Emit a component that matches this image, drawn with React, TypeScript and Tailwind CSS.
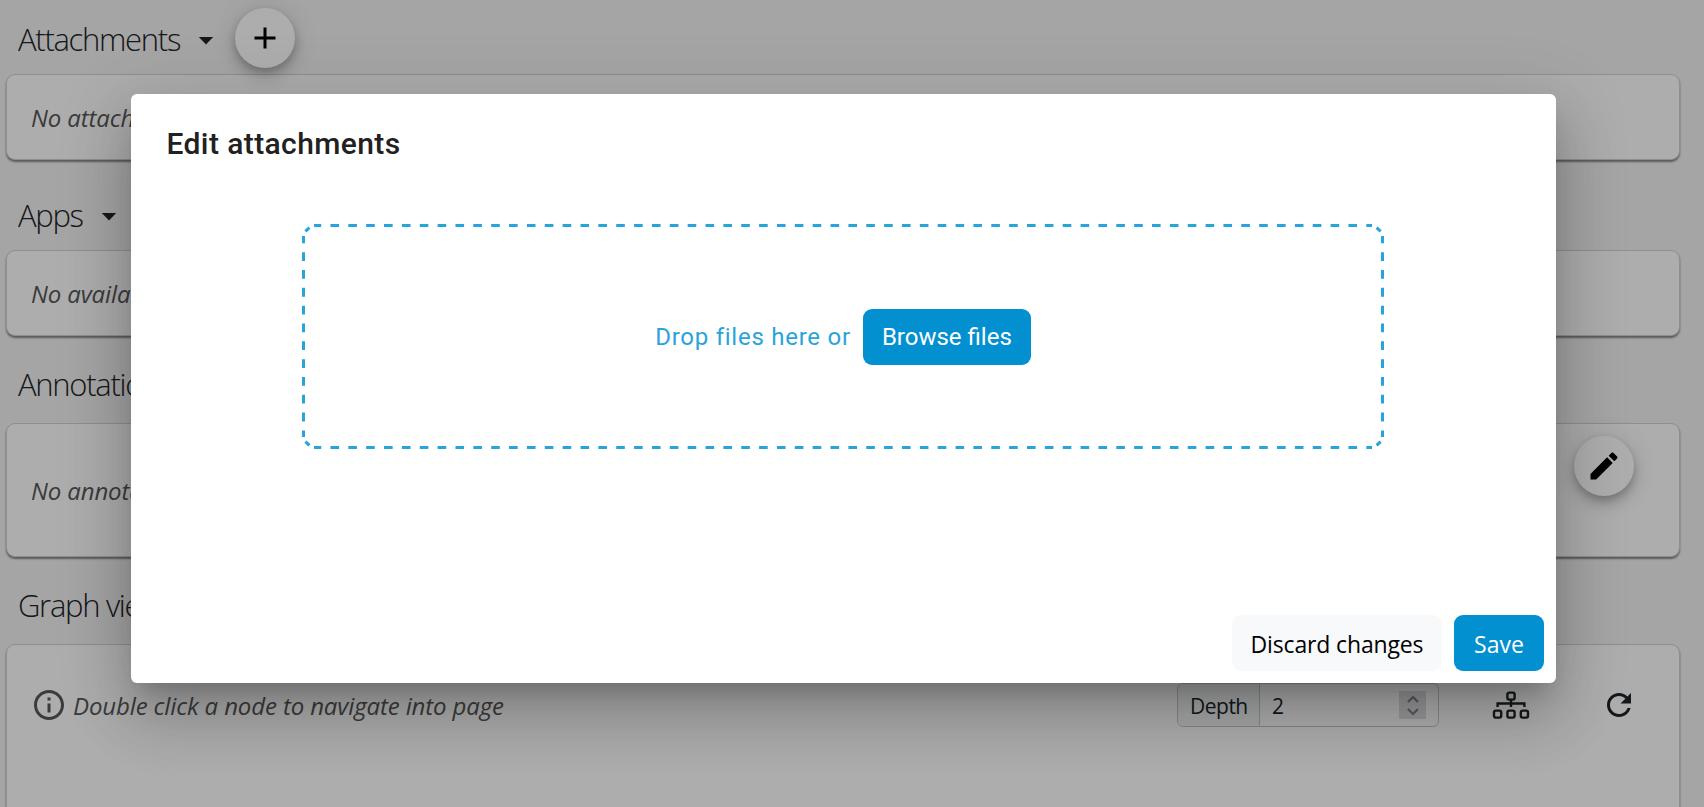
import React from "react";

const dialogShadow =
  "shadow-[0_16px_22px_-10px_rgba(0,0,0,0.2),0_36px_57px_4px_rgba(0,0,0,0.14),0_14px_69px_12px_rgba(0,0,0,0.12)]";
const fabShadow =
  "shadow-[0_4px_8px_-1px_rgba(0,0,0,0.2),0_9px_15px_0_rgba(0,0,0,0.14),0_1px_27px_0_rgba(0,0,0,0.12)]";

function Caret() {
  return (
    <svg className="ml-[18px] mt-1 h-2 w-4" viewBox="0 0 16 8">
      <path d="M.8 0h14.4L8 7.6z" fill="#212529" />
    </svg>
  );
}

function Heading({ text, caret = false }: { text: string; caret?: boolean }) {
  return (
    <h2 className="flex items-center whitespace-nowrap text-[31px] leading-[42px] font-light tracking-[-1.3px] text-[#212529]">
      <span>{text}</span>
      {caret && <Caret />}
    </h2>
  );
}

function Card({ className, children }: { className: string; children: React.ReactNode }) {
  return (
    <div
      className={`ml-[6px] flex w-[1674px] rounded-[9px] border border-[#d2d2d2] bg-white pl-6 text-[24px] tracking-[-0.13px] text-[#585858] shadow-[0_2px_2px_0_rgba(0,0,0,0.45)] ${className}`}
    >
      {children}
    </div>
  );
}

function DropZoneBorder() {
  return (
    <svg
      className="pointer-events-none absolute inset-0"
      width={1082}
      height={225}
      fill="none"
      stroke="#29a3db"
      strokeWidth="3"
    >
      <path d="M12 1.5H1070M12 223.5H1070" strokeDasharray="8.6 9.26" strokeDashoffset="1.4" />
      <path d="M1.5 12V213M1080.5 12V213" strokeDasharray="8.8 9.02" strokeDashoffset="1.6" />
      <path d="M3.4 7.4L7.4 3.6M1078.6 7.4L1074.6 3.6M3.4 217.6L7.4 221.4M1078.6 217.6L1074.6 221.4" />
    </svg>
  );
}

export default function App() {
  return (
    <div className="relative h-[807px] w-[1704px] overflow-hidden bg-[#f3f3f3] font-['Open_Sans','Noto_Sans',sans-serif]">
      <div className="flex h-[74px] items-start pl-[18px]">
        <div className="pt-[18px]">
          <Heading text="Attachments" caret />
        </div>
        <button className={`ml-[21px] mt-2 flex size-[60px] items-center justify-center rounded-full bg-white ${fabShadow}`}>
          <svg className="size-9" viewBox="0 0 24 24">
            <path d="M19 13h-6v6h-2v-6H5v-2h6V5h2v6h6v2z" />
          </svg>
        </button>
      </div>
      <Card className="h-[86px] items-center pt-[2px] italic">No attachments</Card>

      <div className="flex h-[90px] items-start pl-[18px] pt-[34px]">
        <Heading text="Apps" caret />
      </div>
      <Card className="h-[86px] items-center pt-[2px] italic">No available apps</Card>

      <div className="flex h-[87px] items-start pl-[18px] pt-[27px]">
        <Heading text="Annotations" />
      </div>
      <Card className="h-[134px] items-center italic">
        <span className="flex-1 pt-[2px]">No annotations</span>
        <button className={`mb-[49px] mr-[45px] flex size-[60px] items-center justify-center rounded-full bg-white ${fabShadow}`}>
          <svg className="size-9" viewBox="0 0 24 24">
            <path d="M3 17.25V21h3.75L17.81 9.94l-3.75-3.75L3 17.25zM20.71 7.04c.39-.39.39-1.02 0-1.41l-2.34-2.34c-.39-.39-1.02-.39-1.41 0l-1.83 1.83 3.75 3.75 1.83-1.83z" />
          </svg>
        </button>
      </Card>

      <div className="flex h-[87px] items-start pl-[18px] pt-[27px]">
        <Heading text="Graph view" />
      </div>
      <Card className="h-[240px] items-start pt-[38px]">
        <svg className="mt-1 size-9" viewBox="0 0 24 24" fill="#585858">
          <path d="M11 7h2v2h-2zm0 4h2v6h-2zm1-9C6.48 2 2 6.48 2 12s4.48 10 10 10 10-4.48 10-10S17.52 2 12 2zm0 18c-4.41 0-8-3.59-8-8s3.59-8 8-8 8 3.59 8 8-3.59 8-8 8z" />
        </svg>
        <span className="ml-[6px] w-[1104px] leading-[46px] italic">Double click a node to navigate into page</span>
        <div className="flex h-[44px] w-[262px] overflow-hidden rounded-md border border-[#c6c9ce] text-[21px] leading-[45px] text-[#212529]">
          <span className="w-[82px] border-r border-[#c6c9ce] bg-[#f5f7f7] pl-3 tracking-[-0.5px]">Depth</span>
          <span className="flex-1 pl-3">2</span>
          <span className="mr-3 mt-[7px] flex h-[28px] w-[27px] items-center justify-center bg-[#dfdfe3]">
            <svg className="h-6 w-3" viewBox="0 0 12 24" fill="none" stroke="#85858d" strokeWidth="2.2">
              <path d="M1 9l5-5 5 5M1 16l5 5 5-5" />
            </svg>
          </span>
        </div>
        <svg className="ml-[53px] mt-[7px] h-[30px] w-[38px]" viewBox="0 0 38 30" fill="none" stroke="#212529" strokeWidth="2.4">
          <rect x="15.4" y="2.6" width="7.2" height="7" rx="1.8" />
          <rect x="2" y="20.6" width="7.2" height="7" rx="1.8" />
          <rect x="15.4" y="20.6" width="7.2" height="7" rx="1.8" />
          <rect x="28.8" y="20.6" width="7.2" height="7" rx="1.8" />
          <path d="M19 9.6V17M5.6 17v-3.5h26.8V17" />
        </svg>
        <svg className="ml-[71px] mt-[4px] size-9" viewBox="0 0 24 24" fill="#212529">
          <path d="M17.65 6.35C16.2 4.9 14.21 4 12 4c-4.42 0-7.99 3.58-7.99 8s3.57 8 7.99 8c3.73 0 6.84-2.55 7.73-6h-2.08c-.82 2.33-3.04 4-5.65 4-3.31 0-6-2.69-6-6s2.69-6 6-6c1.66 0 3.14.69 4.22 1.78L13 11h7V4l-2.35 2.35z" />
        </svg>
      </Card>

      <div className="absolute inset-0 bg-black/32 pl-[131px] pt-[94px]">
        <section
          role="dialog"
          className={`flex h-[589px] w-[1425px] flex-col rounded-[6px] bg-white font-[Roboto,sans-serif] ${dialogShadow}`}
        >
          <h1 className="pl-[35.5px] pt-[30px] text-[30px] leading-10 font-medium tracking-[0.4px] text-[#212121]">
            Edit attachments
          </h1>
          <div className="relative ml-[171px] mt-[60px] flex h-[225px] w-[1082px] items-center justify-center">
            <DropZoneBorder />
            <span className="text-[24px] tracking-[0.75px] text-[#29a3db]">Drop files here or</span>
            <button className="ml-3 h-[56px] w-[168px] rounded-[9px] bg-[#0290d1] text-[24px] text-white">Browse files</button>
          </div>
          <div className="mt-auto flex justify-end gap-3 pb-3 pr-3 font-['Open_Sans','Noto_Sans',sans-serif] text-[23px]">
            <button className="h-[56px] w-[210px] rounded-[9px] bg-[#f8f9fb] pt-[2px] tracking-[-0.15px] text-black">
              Discard changes
            </button>
            <button className="h-[56px] w-[90px] rounded-[9px] bg-[#0290d1] pt-[2px] text-white">Save</button>
          </div>
        </section>
      </div>
    </div>
  );
}
